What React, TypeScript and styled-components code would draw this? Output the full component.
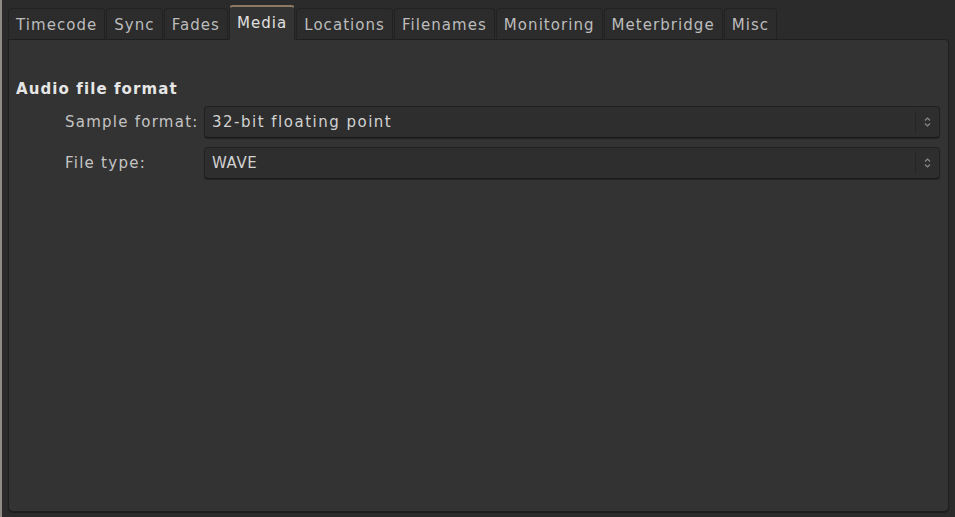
import React from "react";
import styled, { createGlobalStyle } from "styled-components";

const Global = createGlobalStyle`
  html, body { margin: 0; padding: 0; height: 100%; }
  body {
    background: #2b2b2b;
    font-family: "DejaVu Sans", Verdana, sans-serif;
    overflow: hidden;
  }
  #root { height: 100%; }
`;

const Window = styled.div`
  box-sizing: border-box;
  height: 517px;
  width: 955px;
  border-left: 2px solid #8e8a84;
  padding: 6px 6px 5px 6px;
  display: flex;
  flex-direction: column;
`;

const TabBar = styled.div`
  display: flex;
  align-items: flex-end;
  gap: 1px;
  height: 34px;
  position: relative;
  z-index: 1;
  margin-bottom: -1px;
`;

const Tab = styled.div<{ $active?: boolean }>`
  box-sizing: border-box;
  height: ${(p) => (p.$active ? "35px" : "32px")};
  padding: ${(p) => (p.$active ? "0 7px 1px 7px" : "2px 7px 0 7px")};
  display: flex;
  align-items: center;
  font-size: 15px;
  letter-spacing: 1.05px;
  color: ${(p) => (p.$active ? "#e0e0e0" : "#bcbcbc")};
  background: ${(p) => (p.$active ? "#333333" : "#2c2c2c")};
  border: 1px solid ${(p) => (p.$active ? "#232323" : "#222222")};
  border-bottom: ${(p) => (p.$active ? "1px solid #333333" : "1px solid #1e1e1e")};
  border-top: ${(p) => (p.$active ? "2px solid #8c7a62" : "1px solid #232323")};
  border-radius: 4px 4px 0 0;
  white-space: nowrap;
`;

const Panel = styled.div`
  flex: 1;
  background: #333333;
  border: 1px solid #1f1f1f;
  border-radius: 0 4px 5px 5px;
  box-shadow: 0 1px 1px rgba(0, 0, 0, 0.35);
  padding: 39px 8px 0 7px;
  display: flex;
  flex-direction: column;
`;

const Heading = styled.div`
  font-weight: bold;
  font-size: 15px;
  letter-spacing: 1.1px;
  color: #e6e6e6;
  height: 21px;
  line-height: 21px;
  margin-bottom: 6px;
`;

const Form = styled.div`
  display: grid;
  grid-template-columns: 139px 1fr;
  row-gap: 9px;
  padding-left: 49px;
  align-items: center;
`;

const Label = styled.div`
  font-size: 15px;
  letter-spacing: 1.25px;
  color: #c4c4c4;
  white-space: nowrap;
`;

const Combo = styled.div`
  box-sizing: border-box;
  height: 32px;
  display: flex;
  align-items: center;
  background: #2e2e2e;
  border: 1px solid #202020;
  border-bottom-color: #1a1a1a;
  border-radius: 4px;
  box-shadow: 0 1px 1px rgba(0, 0, 0, 0.3);
`;

const ComboText = styled.div<{ $tight?: boolean }>`
  flex: 1;
  padding-left: 7px;
  font-size: 15px;
  letter-spacing: ${(p) => (p.$tight ? "0.6px" : "1.5px")};
  color: #d2d2d2;
  white-space: nowrap;
`;

const ComboArrow = styled.div`
  width: 23px;
  align-self: stretch;
  margin: 4px 0;
  border-left: 1px solid #262626;
  display: flex;
  align-items: center;
  justify-content: center;
`;

const Arrows = () => (
  <svg width="7" height="10" viewBox="0 0 7 10">
    <path d="M1 3.5 L3.5 1 L6 3.5" fill="none" stroke="#8a8a8a" strokeWidth="1.2" />
    <path d="M1 6.5 L3.5 9 L6 6.5" fill="none" stroke="#8a8a8a" strokeWidth="1.2" />
  </svg>
);

const tabs = [
  "Timecode",
  "Sync",
  "Fades",
  "Media",
  "Locations",
  "Filenames",
  "Monitoring",
  "Meterbridge",
  "Misc",
];

export default function App() {
  return (
    <>
      <Global />
      <Window>
        <TabBar>
          {tabs.map((t) => (
            <Tab key={t} $active={t === "Media"}>
              {t}
            </Tab>
          ))}
        </TabBar>
        <Panel>
          <Heading>Audio file format</Heading>
          <Form>
            <Label>Sample format:</Label>
            <Combo>
              <ComboText>32-bit floating point</ComboText>
              <ComboArrow>
                <Arrows />
              </ComboArrow>
            </Combo>
            <Label>File type:</Label>
            <Combo>
              <ComboText $tight>WAVE</ComboText>
              <ComboArrow>
                <Arrows />
              </ComboArrow>
            </Combo>
          </Form>
        </Panel>
      </Window>
    </>
  );
}
